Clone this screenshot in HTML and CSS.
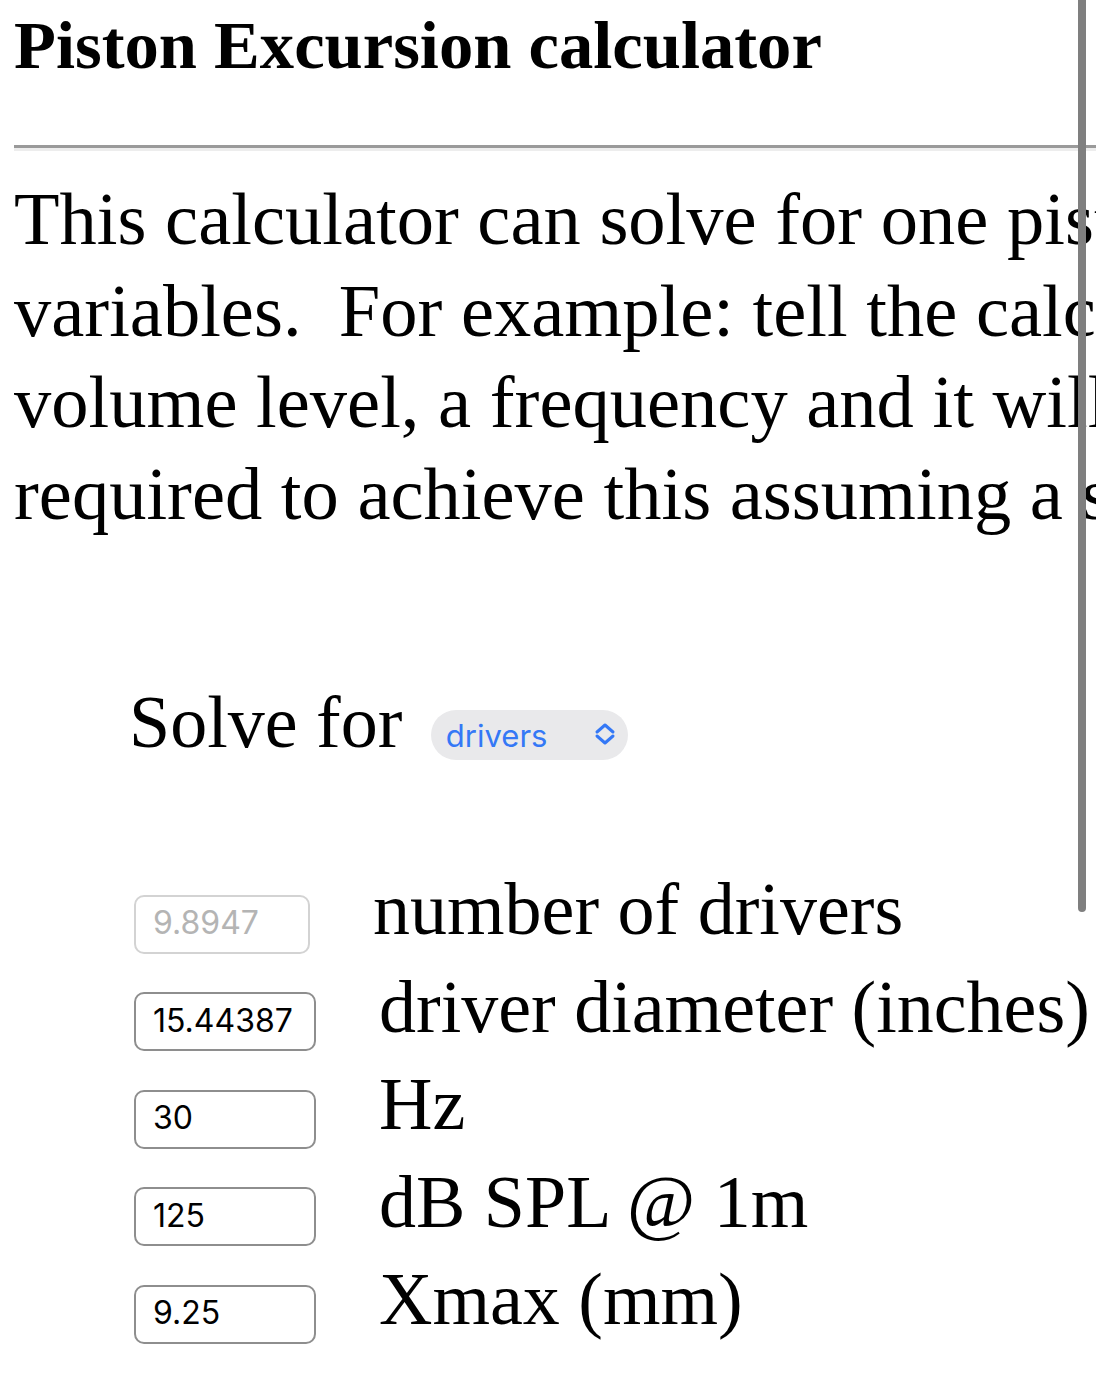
FILE: index.html
```html
<!DOCTYPE html>
<html>
<head>
<meta charset="utf-8" />
<meta name="viewport" content="width=device-width,initial-scale=1.0"/>
<title>Piston Excursion calculator</title>
<link rel="stylesheet" href="styles.css">
</head>
<body>

<h1>Piston Excursion calculator</h1>
<hr>

<p class="intro">This calculator can solve for one piston parameter given the other<br>
variables.&nbsp; For example: tell the calculator the Xmax, driver size, the<br>
volume level, a frequency and it will tell you the number of drivers<br>
required to achieve this assuming a sealed enclosure.</p>

<form id="calc">
	<div class="solve">Solve for <span class="pick">
		<select id="solvefor">
			<option selected>drivers</option>
			<option>diameter</option>
			<option>Hz</option>
			<option>SPL</option>
			<option>Xmax</option>
		</select>
		<svg class="arrows" width="22" height="24" viewBox="0 0 22 24"><polyline points="3,10 11,3 19,10"/><polyline points="3,14 11,21 19,14"/></svg>
	</span></div>

	<div class="rows">
		<div class="row"><input class="num out" type="text" value="9.8947" readonly>number of drivers</div>
		<div class="row"><input class="num" type="text" value="15.44387">driver diameter (inches)</div>
		<div class="row"><input class="num" type="text" value="30">Hz</div>
		<div class="row"><input class="num" type="text" value="125">dB SPL @ 1m</div>
		<div class="row"><input class="num" type="text" value="9.25">Xmax (mm)</div>
	</div>
</form>

<div class="scrollbar"></div>

</body>
</html>
```

FILE: styles.css
```css
html{
	overflow:hidden;
}
body{
	margin:0 0 0 14px;
	font-family:"Liberation Serif","Times New Roman",serif;
	color:#000;
	background:#fff;
}
h1{
	margin:7px 0 0 0;
	font-size:68.6px;
	line-height:76px;
	font-weight:bold;
	white-space:nowrap;
}
hr{
	margin:62px 0 0 0;
	height:0;
	border:0;
	border-top:3px solid #9a9a9a;
	border-bottom:3px solid #ededed;
}
.intro{
	margin:23px 0 0 0;
	font-size:74.5px;
	line-height:91.7px;
	white-space:nowrap;
}
.solve{
	margin:136px 0 0 0;
	padding-left:115px;
	font-size:74px;
	line-height:91.7px;
	white-space:nowrap;
}
.pick{
	position:relative;
	display:inline-flex;
	align-items:center;
	margin-left:10px;
}
.pick select{
	-webkit-appearance:none;
	appearance:none;
	width:197px;
	height:50px;
	border:0;
	border-radius:25px;
	background:#e9e9eb;
	color:#3478f6;
	font-family:Inter,"Noto Sans",sans-serif;
	font-size:31px;
	padding:0 0 0 15px;
	outline:none;
}
.pick .arrows{
	position:absolute;
	right:12px;
	top:12px;
	fill:none;
	stroke:#3478f6;
	stroke-width:3;
	stroke-linecap:round;
	stroke-linejoin:round;
	pointer-events:none;
}
.rows{
	margin-top:92.6px;
	padding-left:120px;
}
.row{
	font-size:74px;
	line-height:97.5px;
	white-space:nowrap;
}
.num{
	box-sizing:border-box;
	width:182px;
	height:59px;
	margin:0 63px 0 0;
	padding:0 0 3px 17px;
	border:2px solid #8e8e8e;
	border-radius:10px;
	background:#fff;
	color:#000;
	font-family:Inter,"Noto Sans",sans-serif;
	font-size:32px;
	vertical-align:baseline;
	outline:none;
}
.num.out{
	width:176px;
	border-color:#d3d3d3;
	color:#b4b4b4;
}
.scrollbar{
	position:fixed;
	top:-10px;
	right:10px;
	width:8px;
	height:922px;
	border-radius:4px;
	background:#7f7f7f;
}
```
